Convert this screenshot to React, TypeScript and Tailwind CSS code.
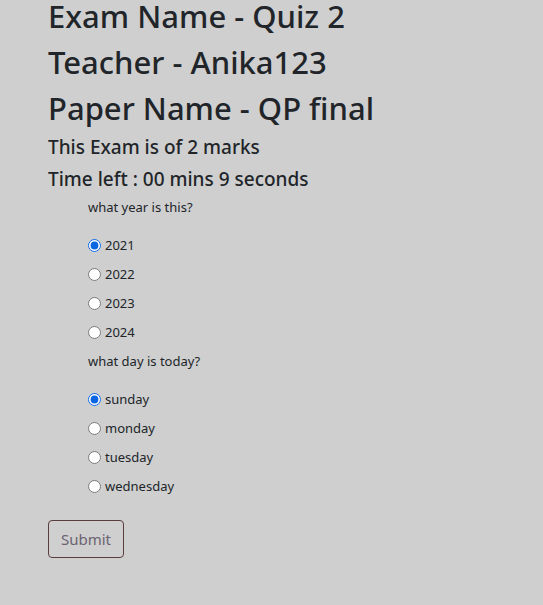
import { useState } from 'react';

const questions = [
    { id: 'q1', text: 'what year is this?', options: ['2021', '2022', '2023', '2024'], picked: '2021' },
    { id: 'q2', text: 'what day is today?', options: ['sunday', 'monday', 'tuesday', 'wednesday'], picked: 'sunday' },
];

function Question({ q }: { q: (typeof questions)[number] }) {
    const [value, setValue] = useState(q.picked);

    return (
        <div className="pl-10">
            <p className="text-[13px] leading-[20px] mb-[14px]">{q.text}</p>
            {q.options.map((opt) => (
                <label key={opt} className="flex items-center h-[29px] text-[13px] cursor-pointer">
                    <input
                        type="radio"
                        name={q.id}
                        checked={value === opt}
                        onChange={() => setValue(opt)}
                        className="m-0 mr-[4px] w-[13px] h-[13px] accent-[#0b66e4]"
                    />
                    {opt}
                </label>
            ))}
        </div>
    );
}

export default function App() {
    return (
        <div
            className="min-h-[605px] bg-[#cfcfcf] text-[#212529] px-12"
            style={{ fontFamily: '"Noto Sans", "Open Sans", sans-serif' }}
        >
            <h2 className="text-[31px] leading-[32px] font-medium mb-[11px]">Exam Name - Quiz 2</h2>
            <h2 className="text-[31px] leading-[38px] font-medium mb-2">Teacher - Anika123</h2>
            <h2 className="text-[31px] leading-[38px] font-medium mb-2">Paper Name - QP final</h2>
            <h5 className="text-[19px] leading-[24px] font-medium mb-2">This Exam is of 2 marks</h5>
            <h5 className="text-[19px] leading-[24px] font-medium mb-[6px]">Time left : 00 mins 9 seconds</h5>

            <form onSubmit={(e) => e.preventDefault()}>
                <Question q={questions[0]} />
                <div className="h-[4px]" />
                <Question q={questions[1]} />

                <button
                    type="submit"
                    className="mt-[19px] w-[76px] h-[38px] border border-[#5a3e3e] rounded-[4px] text-[15px] text-[#6c6270]"
                >
                    Submit
                </button>
            </form>
        </div>
    );
}
